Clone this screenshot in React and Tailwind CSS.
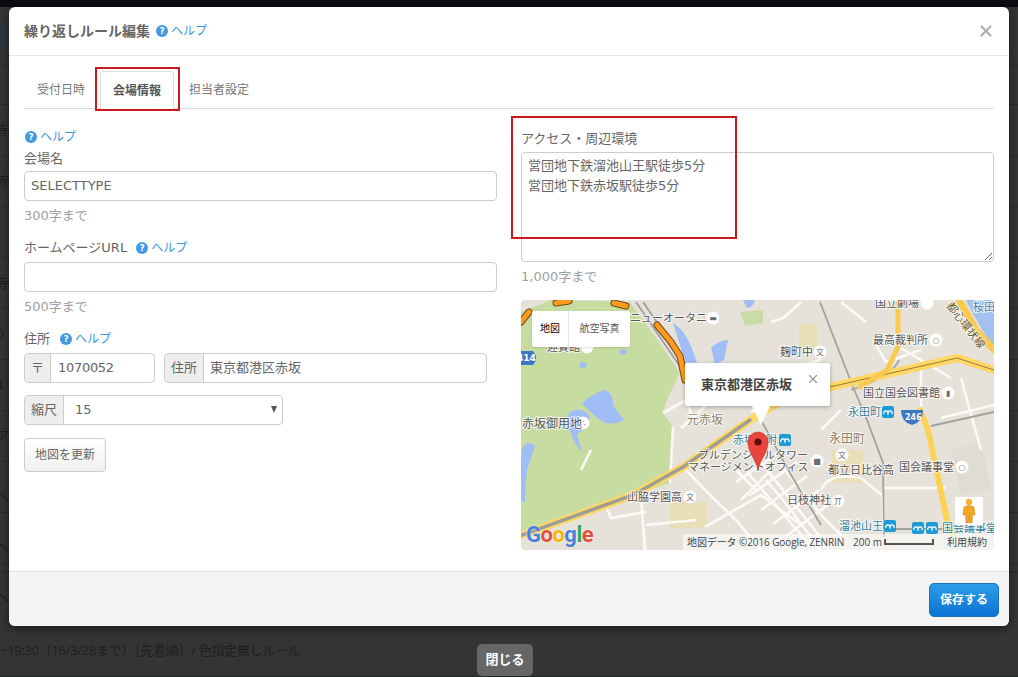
import React from 'react';
import { X } from 'lucide-react';

const FONT = "font-['DejaVu_Sans','Noto_Sans_CJK_JP',sans-serif]";
const CJK = "font-['Open_Sans','Noto_Sans_CJK_JP',sans-serif]";

const ROWS = [
  { h: 'h-[59px]', side: '' },
  { h: 'h-[39px]', side: '' },
  { h: 'h-[51px]', side: '寺' },
  { h: 'h-[51px]', side: '寺' },
  { h: 'h-[51px]', side: '' },
  { h: 'h-[51px]', side: '寺' },
  { h: 'h-[51px]', side: '0' },
  { h: 'h-[51px]', side: '1' },
  { h: 'h-[51px]', side: 'ア' },
  { h: 'h-[51px]', side: 'へ', low: true },
  { h: 'h-[51px]', side: 'へ', low: true },
  { h: 'h-[9px]', side: '' },
];

const LABELS = [
  { x: 109, y: 22, t: 'ニューオータニ' },
  { x: 26, y: 51, t: '迎賓館' },
  { x: 1, y: 128, t: '赤坂御用地', s: 12 },
  { x: 166, y: 124, t: '元赤坂', s: 12, c: '#8d7f66' },
  { x: 354, y: 7, t: '国立劇場' },
  { x: 452, y: 11, t: '桜田', c: '#4f7fb5' },
  { x: 352, y: 44, t: '最高裁判所' },
  { x: 259, y: 56, t: '麹町中' },
  { x: 342, y: 97, t: '国立国会図書館' },
  { x: 327, y: 116, t: '永田町', c: '#2f7f9f' },
  { x: 212, y: 144, t: '赤坂見附', c: '#2f7f9f' },
  { x: 177, y: 159, t: 'プルデンシャルタワー' },
  { x: 167, y: 171, t: 'マネージメントオフィス' },
  { x: 308, y: 143, t: '永田町', s: 12, c: '#8d7f66' },
  { x: 307, y: 174, t: '都立日比谷高' },
  { x: 378, y: 171, t: '国会議事堂' },
  { x: 266, y: 204, t: '日枝神社' },
  { x: 106, y: 201, t: '山脇学園高' },
  { x: 318, y: 230, t: '溜池山王', c: '#2f7f9f' },
  { x: 421, y: 232, t: '国会議事堂', c: '#2f7f9f' },
];

const POIS = [
  { x: 192, y: 18, g: '▬' }, { x: 66, y: 47, g: '' }, { x: 62, y: 123, g: '∴' },
  { x: 406, y: 3, g: '' }, { x: 415, y: 40, g: '○' }, { x: 299, y: 52, g: '文' },
  { x: 427, y: 93, g: '▮' }, { x: 296, y: 161, g: '■' }, { x: 321, y: 155, g: '文' },
  { x: 441, y: 167, g: '○' }, { x: 317, y: 201, g: '丌' }, { x: 169, y: 197, g: '文' },
];

const METROS = [
  { x: 264, y: 140 }, { x: 367, y: 112 }, { x: 369, y: 226 }, { x: 397, y: 228 }, { x: 411, y: 228 },
];

function MapDrawing() {
  return (
    <svg viewBox="0 0 473 250" className="block w-full h-full">
      <rect width="473" height="250" fill="#e6e2da" />
      {/* park and water */}
      <path d="M0 12 L30 0 L109 2 L135 38 L159 73 L146 100 L142 113 L152 127 L149 183 L112 195 L60 214 L0 237 Z" fill="#c7dca0" />
      <path d="M219 12 L242 10 L242 23 L224 26 Z" fill="#c9dca6" />
      <path d="M452 14 L473 50 L473 0 L445 0 Z" fill="#a3c1ef" />
      <path d="M61 103 Q74 92 84 90 Q93 93 92 105 Q97 112 103 120 Q92 126 82 122 Q70 114 61 103 Z" fill="#a0bdf5" />
      <path d="M49 112 Q60 106 69 116 Q68 128 56 134 Q58 144 62 153 Q52 144 50 132 Q42 124 49 112 Z" fill="#a0bdf5" />
      <path d="M2 146 Q10 140 14 146 Q10 158 6 170 Q4 186 4 203 L0 200 L0 160 Z" fill="#a0bdf5" />
      <ellipse cx="62" cy="65" rx="3.5" ry="3" fill="#a0bdf5" />
      <ellipse cx="102" cy="52" rx="4" ry="2.5" fill="#a0bdf5" />
      <path d="M152 23 Q166 30 176 63 L164 62 Q158 42 152 23 Z" fill="#a0bdf5" />
      <path d="M190 48 Q198 40 207 40 L203 60 L194 64 Z" fill="#a0bdf5" />
      <path d="M222 0 L234 0 Q232 8 226 8 Z" fill="#a0bdf5" />
      <rect x="311" y="150" width="31" height="33" fill="#e8dfb9" />
      <rect x="149" y="202" width="37" height="26" fill="#e8dfb9" />
      <rect x="278" y="24" width="18" height="28" fill="#e8dfb9" />
      <path d="M430 150 L460 140 L470 190 L440 195 Z" fill="#dfdcd3" />
      {/* white streets */}
      <g fill="none" stroke="#fbfaf7" strokeWidth="2.6">
        <path d="M152 127 L149 183 M162 167 L190 196 L215 220 L240 250 M120 196 L124 250 M84 204 L90 218 L125 212 M125 225 L175 220 M184 227 L240 195 L280 225" />
        <path d="M190 100 L172 118 M230 112 L262 98 M245 180 L262 200 L300 250 M215 170 L235 190 M220 200 L250 170 M260 165 L300 215 L320 235" />
        <path d="M300 190 Q308 172 340 178 L362 196 L363 235 M363 188 L425 188 M400 110 L400 60 M380 48 L430 78 M352 40 L365 62 L400 50 M440 78 L460 150" />
        <path d="M280 2 L262 18 L250 22 M320 2 L345 22 M300 60 L260 70 M420 118 L473 105 M320 110 L300 130 M70 150 L60 170" />
        <path d="M215 182 L262 150 M228 196 L276 162 M240 210 L286 176 M252 224 L298 190 M265 236 L308 204 M238 160 L300 238 M226 172 L288 244 M142 113 L165 100 L172 118 L160 128" />
      </g>
      {/* grey rail lines */}
      <g fill="none" stroke="#a2a29c" strokeWidth="1.8">
        <path d="M299 2 L332 87 L346 120 L362 163 L363 237" />
        <path d="M115 2 L160 68 L170 84 M122 2 L166 66 M240 120 L270 175 L300 225 M410 126 L473 112" />
        <path d="M308 92 L255 100 L240 112 M378 60 Q372 76 330 90" />
        <path d="M370 229 L473 229" />
      </g>
      {/* expressways */}
      <g fill="none" strokeLinecap="round">
        <path d="M-2 236 L112 195 L162 167 L229 120 L262 100 L309 87 L436 58 L473 70" stroke="#fdd768" strokeWidth="8" />
        <path d="M-2 236 L112 195 L162 167 L229 120" stroke="#a09e92" strokeWidth="3.5" />
        <path d="M309 87 L436 58 L473 70" stroke="#a07d2a" strokeWidth="1" />
        <path d="M377 2 L377 47 L366 70 L339 87" stroke="#fbc94f" strokeWidth="5" />
        <path d="M399 110 L407 130 L426 220 L432 234" stroke="#fbd256" strokeWidth="6" />
        <path d="M438 0 L455 30 L473 50" stroke="#fbc94f" strokeWidth="7" />
        <path d="M136 25 L150 42 L159 56 L164 80" stroke="#6b4a14" strokeWidth="7" />
        <path d="M136 25 L150 42 L159 56 L164 80" stroke="#ff9a1f" strokeWidth="5" />
        <path d="M93 3 L105 6 M35 3 L48 1 M0 22 L8 12" stroke="#6b4a14" strokeWidth="7" />
        <path d="M93 3 L105 6 M35 3 L48 1 M0 22 L8 12" stroke="#ff9a1f" strokeWidth="5" />
      </g>
      {/* route shields */}
      <path d="M0 51 L12 51 Q18 58 12 65 L0 65 Z" fill="#3a77c4" />
      <text x="-4" y="61" fontSize="9" fontWeight="700" fill="#fff">414</text>
      <path d="M380 110 L402 110 Q402 122 391 125 Q380 122 380 110 Z" fill="#3a77c4" />
      <text x="384" y="120" fontSize="8" fontWeight="700" fill="#fff">246</text>
      {/* POIs */}
      {POIS.map((p, i) => (
        <g key={i}>
          <circle cx={p.x} cy={p.y} r="6.5" fill="#fff" />
          <text x={p.x} y={p.y + 3} fontSize="8" textAnchor="middle" fill="#6d6d6d">{p.g}</text>
        </g>
      ))}
      {METROS.map((m, i) => (
        <g key={i}>
          <rect x={m.x - 6} y={m.y - 6} width="12" height="12" rx="2" fill="#1d9bd6" />
          <path d={`M${m.x - 4} ${m.y + 2} a2.2 2.2 0 1 1 4 0 a2.2 2.2 0 1 1 4 0`} fill="none" stroke="#fff" strokeWidth="1.3" />
        </g>
      ))}
      {LABELS.map((l, i) => (
        <text key={i} x={l.x} y={l.y} fontSize={l.s || 11} fill={l.c || '#555'} stroke="#ffffff" strokeOpacity="0.75" strokeWidth="2" paintOrder="stroke" fontFamily="'Noto Sans CJK JP', sans-serif">{l.t}</text>
      ))}
      <text transform="translate(425 6) rotate(52)" fontSize="11" fill="#6b5a2c" stroke="#fff" strokeOpacity="0.6" strokeWidth="2" paintOrder="stroke" fontFamily="'Noto Sans CJK JP', sans-serif">都心環状線</text>
    </svg>
  );
}

function Marker() {
  return (
    <svg viewBox="0 0 22 40" className="w-[22px] h-[40px]">
      <path d="M11 39 C9 28 1 22 1 11 A10 10 0 0 1 21 11 C21 22 13 28 11 39 Z" fill="#e9453c" stroke="#b8302a" strokeWidth="0.6" />
      <circle cx="11" cy="11" r="3.6" fill="#5a0f0c" />
    </svg>
  );
}

function Pegman() {
  return (
    <svg viewBox="0 0 14 26" className="w-[14px] h-[26px]">
      <circle cx="7" cy="4" r="3.2" fill="#f4b233" />
      <path d="M2 9 Q7 6 12 9 L13 17 L10.5 17 L10 25 L7.6 25 L7 18 L6.4 25 L4 25 L3.5 17 L1 17 Z" fill="#f4a522" stroke="#c27d12" strokeWidth="0.5" />
    </svg>
  );
}

function Help({ className = '' }) {
  return (
    <span className={`inline-flex items-center gap-[3px] text-[12px] leading-[17px] text-[#3b96d9] ${className}`}>
      <span className="w-[12px] h-[12px] rounded-full bg-[#4399e0] text-white text-[9px] leading-[12px] font-bold text-center">?</span>
      ヘルプ
    </span>
  );
}

function Addon({ children, className = '' }) {
  return (
    <span className={`flex items-center justify-center shrink-0 bg-[#eeeeee] border-r border-[#cccccc] text-[#666] ${className}`}>
      {children}
    </span>
  );
}

function Hint({ children, className = '' }) {
  return <p className={`text-[13px] leading-[18px] text-[#a0a0a0] ${className}`}>{children}</p>;
}

export default function App() {
  return (
    <div className={`relative w-[1018px] h-[677px] overflow-hidden bg-[#343434] text-[#666] ${FONT}`}>
      {/* page behind the overlay */}
      <div className="h-[7px] bg-[#0a0c10]" />
      {ROWS.map((r, i) => (
        <div key={i} className={`${r.h} flex ${r.low ? 'items-end pb-[6px]' : 'items-center'} border-b border-[#2a2a2a] text-[13px] text-[#1f1f1f] overflow-hidden`}>
          <span className="ml-[-4px]">{r.side}</span>
        </div>
      ))}
      <div className="pt-[16px] text-[13px] leading-[18px] text-[#1f1f1f]">
        <p className="ml-[-4px]">へ</p>
        <p className={`mt-[34px] tracking-[-0.3px] ${CJK}`}>~19:30（16/3/28まで）［先着順］/ 色指定無しルール</p>
      </div>
      <div className="absolute left-0 right-0 bottom-0 h-px bg-[#1c2a22]" />
      <div className="absolute left-[2px] top-[23px] w-[10px] h-[27px] border border-[#24384f]" />

      <button className="absolute left-[477px] top-[644px] w-[56px] h-[32px] rounded-[5px] bg-[#666666] text-white text-[13px] font-bold">
        閉じる
      </button>

      {/* modal */}
      <div className="absolute left-[9px] top-[7px] w-[1000px] h-[619px] flex flex-col bg-white rounded-[6px] shadow-[0_2px_8px_rgba(0,0,0,0.5)] overflow-hidden">
        <header className="h-[49px] shrink-0 flex items-center px-[15px] border-b border-[#e5e5e5]">
          <h1 className="text-[14px] font-bold text-[#666]">繰り返しルール編集</h1>
          <Help className="ml-[6px]" />
          <X className="ml-auto mr-[-1px] w-[18px] h-[18px] text-[#b0b0b0]" strokeWidth={3} />
        </header>

        <main className="flex-1 px-[15px] pt-[15px]">
          <nav className="flex h-[38px] border-b border-[#dddddd] text-[12px]">
            <span className="px-[13px] pt-[10px] mr-[2px] text-[#777]">受付日時</span>
            <span className="px-[12px] pt-[10px] mr-[2px] h-[38px] bg-white border border-b-0 border-[#dddddd] rounded-t-[4px] font-bold text-[#555]">会場情報</span>
            <span className="px-[13px] pt-[10px] text-[#777]">担当者設定</span>
          </nav>

          <div className="grid grid-cols-2 gap-x-[24px] mt-[17px] text-[13px]">
            <section>
              <Help className="ml-[1px]" />
              <label className="block mt-[4px] leading-[17px]">会場名</label>
              <input readOnly value="SELECTTYPE" className="block mt-[4px] w-full h-[30px] px-[6px] border border-[#cccccc] rounded-[4px] outline-none" />
              <Hint className="mt-[6px]">300字まで</Hint>

              <div className="flex items-center mt-[15px] h-[17px]">
                <label>ホームページURL</label>
                <Help className="ml-[9px]" />
              </div>
              <input readOnly value="" className="block mt-[5px] w-full h-[30px] px-[6px] border border-[#cccccc] rounded-[4px] outline-none" />
              <Hint className="mt-[6px]">500字まで</Hint>

              <div className="flex items-center mt-[15px] h-[17px]">
                <label>住所</label>
                <Help className="ml-[10px]" />
              </div>
              <div className="flex mt-[5px]">
                <div className="flex w-[131px] h-[30px] border border-[#cccccc] rounded-[4px] overflow-hidden">
                  <Addon className="w-[26px]">〒</Addon>
                  <span className="px-[7px] leading-[28px] tracking-[-0.3px]">1070052</span>
                </div>
                <div className="flex w-[323px] h-[30px] ml-[9px] border border-[#cccccc] rounded-[4px] overflow-hidden">
                  <Addon className="w-[39px]">住所</Addon>
                  <span className="px-[6px] leading-[28px]">東京都港区赤坂</span>
                </div>
              </div>
              <div className="flex w-[259px] h-[30px] mt-[12px] border border-[#cccccc] rounded-[4px] overflow-hidden">
                <Addon className="w-[39px]">縮尺</Addon>
                <span className="flex-1 px-[11px] leading-[28px]">15</span>
                <span className="self-center mr-[5px] w-0 h-0 border-x-[3.5px] border-x-transparent border-t-[7px] border-t-[#555]" />
              </div>
              <button className="block mt-[13px] w-[82px] h-[34px] border border-[#cccccc] rounded-[4px] bg-gradient-to-b from-white to-[#f0f0f0] text-[12px] text-[#666]">
                地図を更新
              </button>
            </section>

            <section>
              <label className="block mt-[4px] leading-[17px]">アクセス・周辺環境</label>
              <textarea
                readOnly
                value={'営団地下鉄溜池山王駅徒歩5分\n営団地下鉄赤坂駅徒歩5分'}
                className="block mt-[5px] w-full h-[110px] px-[6px] py-[3px] border border-[#cccccc] rounded-[4px] leading-[20px] outline-none resize-y"
              />
              <Hint className="mt-[6px]">1,000字まで</Hint>

              <div className="relative mt-[14px] h-[250px] rounded-[4px] overflow-hidden">
                <MapDrawing />
                <div className="absolute left-[11px] top-[11px] flex h-[36px] bg-white text-[10px] shadow-sm rounded-[2px]">
                  <span className="w-[37px] text-center leading-[36px] text-black border-r border-[#e5e5e5]">地図</span>
                  <span className="w-[61px] text-center leading-[36px] text-[#555]">航空写真</span>
                </div>
                <div className="absolute left-[164px] top-[63px] w-[145px] h-[43px] bg-white rounded-[2px] shadow-[0_1px_4px_rgba(0,0,0,0.3)] flex items-center pl-[16px] font-bold text-[13px] text-[#444]">
                  東京都港区赤坂
                  <X className="absolute right-[10px] top-[9px] w-[14px] h-[14px] text-[#999]" strokeWidth={2} />
                </div>
                <div className="absolute left-[231px] top-[106px] w-0 h-0 border-x-[9px] border-x-transparent border-t-[19px] border-t-white" />
                <div className="absolute left-[226px] top-[131px]">
                  <Marker />
                </div>
                <div className="absolute left-[434px] top-[197px] w-[28px] h-[28px] bg-white flex items-center justify-center">
                  <Pegman />
                </div>
                <div className="absolute left-[5px] bottom-[3px] text-[22px] leading-[24px] font-bold tracking-[-0.5px] font-['Roboto','Liberation_Sans',sans-serif] [text-shadow:0_0_2px_#fff]">
                  <span className="text-[#4a7fdc]">G</span>
                  <span className="text-[#e4503f]">o</span>
                  <span className="text-[#f4b400]">o</span>
                  <span className="text-[#4a7fdc]">g</span>
                  <span className="text-[#35a853]">l</span>
                  <span className="text-[#e4503f]">e</span>
                </div>
                <div className={`absolute right-0 bottom-0 left-[162px] h-[16px] bg-white/60 flex items-center text-[10px] text-[#444] whitespace-nowrap ${CJK}`}>
                  <span className="ml-[4px] w-[166px] tracking-[-0.1px]">地図データ ©2016 Google, ZENRIN</span>
                  <span className="w-[31px]">200 m</span>
                  <span className="w-[50px] h-[6px] border-x-2 border-b-2 border-[#555]" />
                  <span className="ml-[13px]">利用規約</span>
                </div>
              </div>
            </section>
          </div>
        </main>

        <footer className="h-[55px] shrink-0 flex items-center justify-end pr-[10px] bg-[#f4f4f4] border-t border-[#dddddd]">
          <button className="w-[70px] h-[34px] mt-[1px] rounded-[5px] border border-[#1a72b8] bg-gradient-to-b from-[#2c9de9] to-[#0a72d2] text-white text-[12px] font-bold">
            保存する
          </button>
        </footer>
      </div>

      {/* red annotation boxes */}
      <div className="absolute left-[95px] top-[67px] w-[85px] h-[44px] border-2 border-[#c8191c]" />
      <div className="absolute left-[511px] top-[116px] w-[226px] h-[123px] border-2 border-[#c8191c]" />
    </div>
  );
}
